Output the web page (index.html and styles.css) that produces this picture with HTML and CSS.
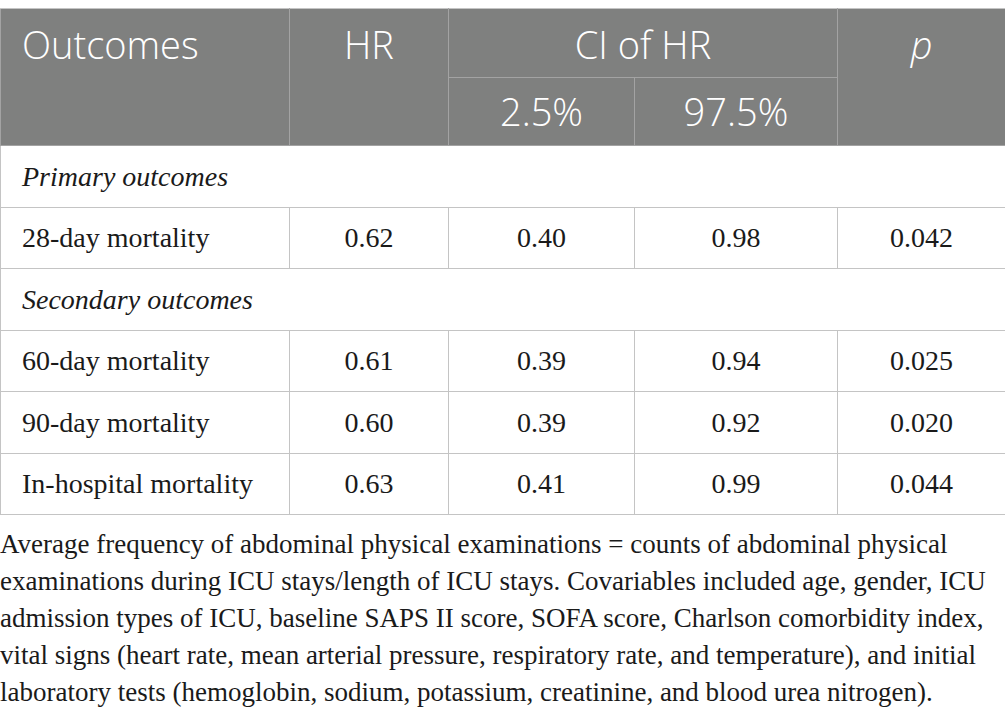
FILE: index.html
```html
<!DOCTYPE html>
<html lang="en">
<head>
<meta charset="utf-8">
<title>Outcomes table</title>
<link rel="stylesheet" href="styles.css">
</head>
<body>
<table class="tbl">
  <colgroup>
    <col class="c1"><col class="c2"><col class="c3"><col class="c4"><col class="c5">
  </colgroup>
  <thead>
    <tr class="h1">
      <th rowspan="2" class="left">Outcomes</th>
      <th rowspan="2">HR</th>
      <th colspan="2">CI of HR</th>
      <th rowspan="2"><i>p</i></th>
    </tr>
    <tr class="h2">
      <th>2.5%</th>
      <th>97.5%</th>
    </tr>
  </thead>
  <tbody>
    <tr class="r62"><td colspan="5" class="left sec">Primary outcomes</td></tr>
    <tr class="r61"><td class="left">28-day mortality</td><td>0.62</td><td>0.40</td><td>0.98</td><td>0.042</td></tr>
    <tr class="r62"><td colspan="5" class="left sec">Secondary outcomes</td></tr>
    <tr class="r61"><td class="left">60-day mortality</td><td>0.61</td><td>0.39</td><td>0.94</td><td>0.025</td></tr>
    <tr class="r62"><td class="left">90-day mortality</td><td>0.60</td><td>0.39</td><td>0.92</td><td>0.020</td></tr>
    <tr class="r61"><td class="left">In-hospital mortality</td><td>0.63</td><td>0.41</td><td>0.99</td><td>0.044</td></tr>
  </tbody>
</table>
<p class="note">Average frequency of abdominal physical examinations = counts of abdominal physical examinations during ICU stays/length of ICU stays. Covariables included age, gender, ICU admission types of ICU, baseline SAPS II score, SOFA score, Charlson comorbidity index, vital signs (heart rate, mean arterial pressure, respiratory rate, and temperature), and initial laboratory tests (hemoglobin, sodium, potassium, creatinine, and blood urea nitrogen).</p>
</body>
</html>
```
FILE: styles.css
```css
html, body {
  background: #ffffff;
}
body {
  margin: 8px 0 0 0;
  font-family: "Liberation Serif", "Times New Roman", serif;
  color: #1a1a1a;
}
.tbl {
  width: 1005px;
  table-layout: fixed;
  border-collapse: collapse;
  border: 1px solid #c4c4c4;
}
.c1 { width: 289px; }
.c2 { width: 159px; }
.c3 { width: 186px; }
.c4 { width: 203px; }
.c5 { width: 168px; }

.tbl th {
  background: #7f807f;
  color: #ffffff;
  font-family: "Open Sans", "Liberation Sans", sans-serif;
  font-weight: 300;
  font-size: 38px;
  text-align: center;
  vertical-align: top;
  border: 1px solid #a3a3a3;
  padding: 3px 21px 0 21px;
  line-height: 65px;
}
.tbl .h2 th {
  padding-top: 0;
  line-height: 67px;
}
.tbl thead tr:first-child th {
  border-top-color: #c4c4c4;
}
.tbl th i { font-style: italic; }
.h1 { height: 69px; }
.h2 { height: 68px; }

.tbl td {
  border: 1px solid #c4c4c4;
  font-size: 28px;
  text-align: center;
  vertical-align: middle;
  padding: 0 21px;
}
.tbl .left { text-align: left; }
.tbl .sec { font-style: italic; }
.r61 { height: 61px; }
.r62 { height: 62px; }

.note {
  margin: 11px 0 0 0;
  font-size: 27px;
  line-height: 37px;
  color: #1a1a1a;
}
```
